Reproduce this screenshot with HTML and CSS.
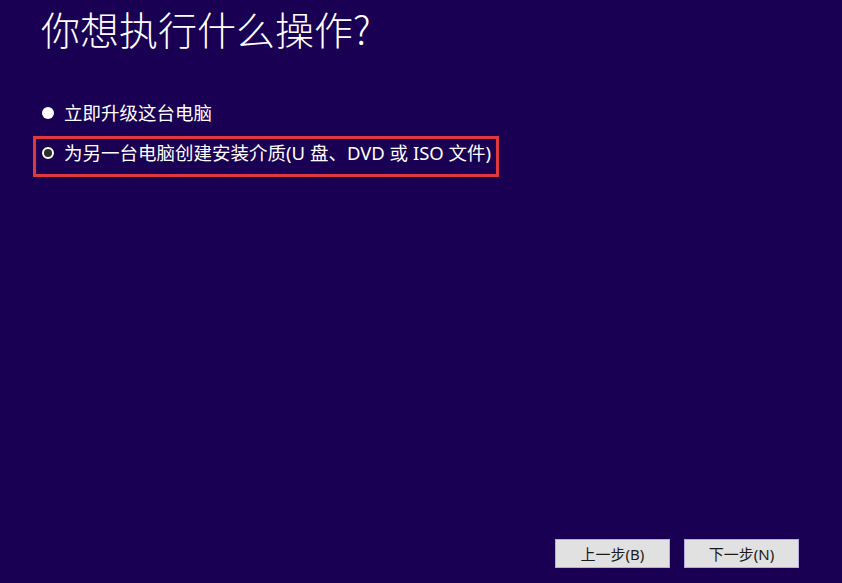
FILE: index.html
```html
<!DOCTYPE html>
<html lang="zh-CN">
<head>
<meta charset="utf-8">
<title>Windows 安装程序</title>
<link rel="stylesheet" href="styles.css">
</head>
<body>
<div class="page">
  <h1 class="title">你想执行什么操作?</h1>
  <div class="options">
    <label class="option">
      <span class="radio"></span>
      <span class="label">立即升级这台电脑</span>
    </label>
    <label class="option option-selected">
      <span class="radio radio-checked"></span>
      <span class="label">为另一台电脑创建安装介质(U 盘、DVD 或 ISO 文件)</span>
    </label>
  </div>
  <div class="footer">
    <button class="btn">上一步(B)</button>
    <button class="btn">下一步(N)</button>
  </div>
</div>
</body>
</html>
```
FILE: styles.css
```css
html, body {
  margin: 0;
  padding: 0;
  background: #1a0052;
}
.page {
  height: 583px;
  display: flex;
  flex-direction: column;
  font-family: "Noto Sans", "Noto Sans CJK SC", sans-serif;
  color: #ffffff;
}
.title {
  margin: 6px 0 0 41px;
  font-family: "Noto Sans CJK SC", sans-serif;
  font-size: 39px;
  line-height: 44px;
  font-weight: 300;
  letter-spacing: 0;
}
.options {
  margin: 46px 0 0 33px;
  display: flex;
  flex-direction: column;
}
.option {
  box-sizing: border-box;
  height: 40px;
  width: 466px;
  border: 3px solid transparent;
  padding: 3px 0 0 6px;
  display: flex;
  align-items: flex-start;
  gap: 10px;
  font-size: 18.5px;
  line-height: 22px;
}
.option-selected {
  height: 41px;
  border-color: #e0383f;
}
.radio {
  box-sizing: border-box;
  width: 12px;
  height: 12px;
  margin-top: 5px;
  border-radius: 50%;
  background: #ffffff;
  flex: none;
}
.radio-checked {
  background: #2e2e2e;
  border: 2px solid #ffffff;
}
.label {
  white-space: nowrap;
}
.footer {
  margin-top: auto;
  padding: 0 43px 15px 0;
  display: flex;
  justify-content: flex-end;
  gap: 14px;
}
.btn {
  box-sizing: border-box;
  width: 115px;
  height: 29px;
  background: #e1e1e1;
  border: 1px solid #b7acdf;
  font-family: "Noto Sans", "Noto Sans CJK SC", sans-serif;
  font-size: 15px;
  color: #1a1a1a;
  padding: 0;
}
```
